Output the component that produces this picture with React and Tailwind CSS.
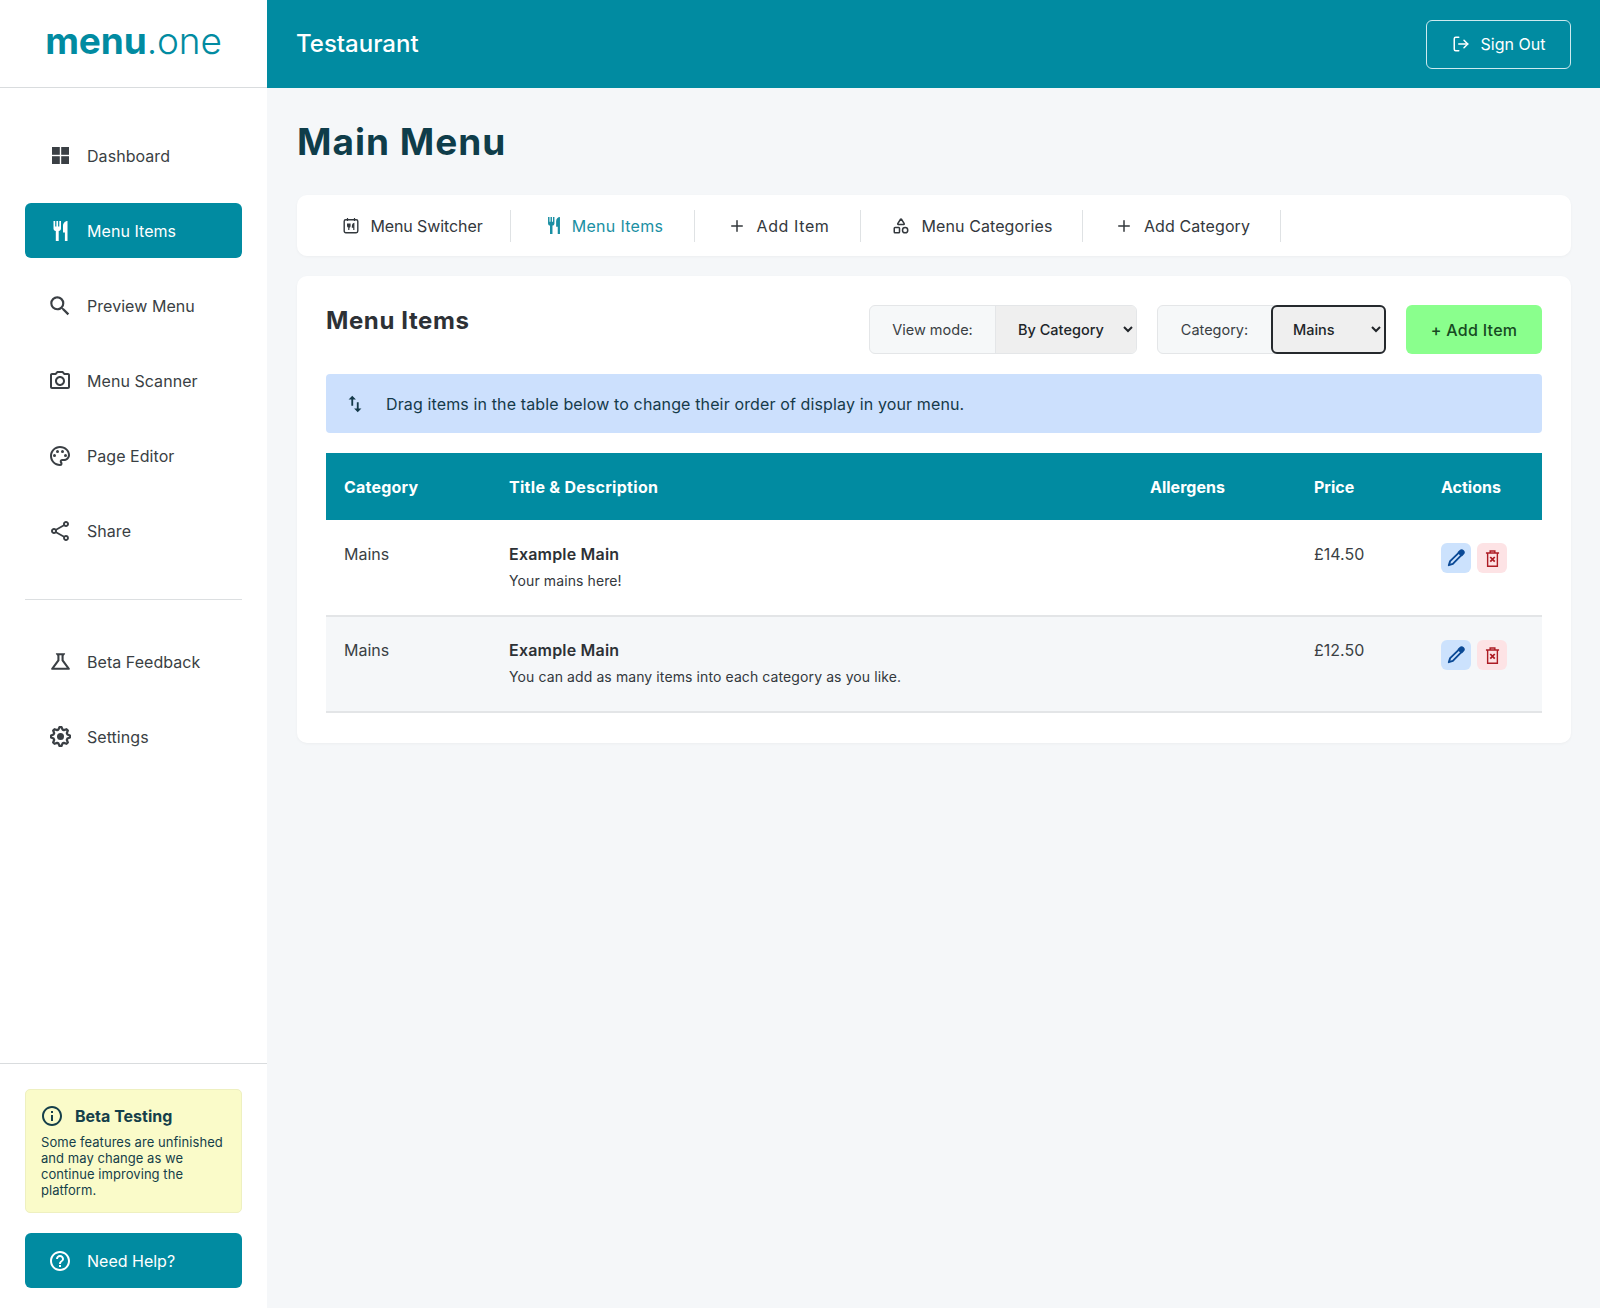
import React from 'react';
import { MdSearch, MdOutlinePhotoCamera, MdOutlinePalette, MdOutlineShare, MdOutlineScience, MdOutlineInfo, MdOutlineHelpOutline, MdSwapVert } from 'react-icons/md';
import { LuShapes, LuPlus, LuLogOut } from 'react-icons/lu';

const Squares = ({ className }) => (
  <svg viewBox="0 0 17 17" fill="currentColor" className={className}>
    <rect x="0" y="0" width="7.8" height="7.8" />
    <rect x="9.2" y="0" width="7.8" height="7.8" />
    <rect x="0" y="9.2" width="7.8" height="7.8" />
    <rect x="9.2" y="9.2" width="7.8" height="7.8" />
  </svg>
);

const ForkKnife = ({ className }) => (
  <svg viewBox="0 0 15 20" fill="currentColor" className={className}>
    <path d="M.5 0h1.7v5.5h1.2V0h1.7v5.5h1.2V0H8v7.5c0 1.3-1 2.3-2.3 2.6V20H2.8V10.1C1.5 9.8.5 8.8.5 7.5z" />
    <path d="M14.5 0v20h-2.6v-8.5H10V5c0-2.7 2-5 4.5-5z" />
  </svg>
);

const CalendarFork = ({ className }) => (
  <svg viewBox="0 0 16 16" fill="none" stroke="currentColor" className={className}>
    <rect x="1.2" y="2.2" width="13.6" height="13" rx="1.6" strokeWidth="1.4" />
    <path d="M4.5 0.4v3.2M11.5 0.4v3.2M4.6 6v2.6c0 .8.6 1.1 1.2 1.1s1.2-.3 1.2-1.1V6M5.8 6v6.6M10.8 12.6V6c-1.1.4-1.4 2-1.4 3.6h1.4" strokeWidth="1.2" />
  </svg>
);

const Pencil = ({ className }) => (
  <svg viewBox="0 0 16 16" fill="none" stroke="currentColor" strokeWidth="1.7" strokeLinejoin="round" className={className}>
    <path d="M10.6 3.2l2.2 2.2L5.2 13.2 1.6 14.4l1.2-3.6z" />
    <path d="M10.4 3l1.3-1.3a1.5 1.5 0 0 1 2.6 2.6L13 5.6z" fill="currentColor" />
  </svg>
);

const TrashX = ({ className }) => (
  <svg viewBox="0 0 16 18" fill="none" stroke="currentColor" strokeWidth="1.5" className={className}>
    <path d="M1 3.2h14M5.5 3V1h5v2M2.8 3.2v14h10.4v-14" />
    <path d="M5.6 7.4l4.8 5M10.4 7.4l-4.8 5" strokeWidth="1.9" />
  </svg>
);

// outlined cog with a solid hub
const gearPoints = Array.from({ length: 32 }, (_, i) => {
  const tooth = i % 4 < 2;
  const a = ((i - 0.5) / 32) * Math.PI * 2;
  const r = tooth ? 10.8 : 8.2;
  return `${(12 + r * Math.cos(a)).toFixed(2)},${(12 + r * Math.sin(a)).toFixed(2)}`;
}).join(' ');

const Gear = ({ className }) => (
  <svg viewBox="0 0 24 24" className={className}>
    <polygon points={gearPoints} fill="none" stroke="currentColor" strokeWidth="2.6" strokeLinejoin="round" />
    <circle cx="12" cy="12" r="4" fill="currentColor" />
  </svg>
);

const navTop = [
  { label: 'Dashboard', icon: <Squares className="w-[17px] h-[17px]" /> },
  { label: 'Menu Items', icon: <ForkKnife className="w-[15px] h-[20px]" />, active: true },
  { label: 'Preview Menu', icon: <MdSearch className="w-[26px] h-[26px] shrink-0" /> },
  { label: 'Menu Scanner', icon: <MdOutlinePhotoCamera className="w-[24px] h-[24px] shrink-0" /> },
  { label: 'Page Editor', icon: <MdOutlinePalette className="w-[24px] h-[24px] shrink-0" /> },
  { label: 'Share', icon: <MdOutlineShare className="w-[24px] h-[24px] shrink-0" /> },
];

const navBottom = [
  { label: 'Beta Feedback', icon: <MdOutlineScience className="w-[25px] h-[25px] shrink-0" /> },
  { label: 'Settings', icon: <Gear className="w-[21px] h-[21px] shrink-0" /> },
];

const NavItem = ({ item }) => (
  <a className={`flex items-center h-[55px] rounded-md pl-[25px] gap-[17px] text-base ${item.active ? 'bg-[#018ba1] text-white' : 'text-[#3a3f44]'}`}>
    <span className="w-[20px] flex justify-center">{item.icon}</span>
    <span className="tracking-[0.05px]">{item.label}</span>
  </a>
);

const tabs = [
  { label: 'Menu Switcher', icon: <CalendarFork className="w-[16px] h-[17px]" />, cls: 'w-[214px] pl-[19px] tracking-[-0.1px]' },
  { label: 'Menu Items', icon: <ForkKnife className="w-[14px] h-[17px]" />, active: true, cls: 'w-[184px] pl-[5px] tracking-[0.3px]' },
  { label: 'Add Item', icon: <LuPlus className="w-[18px] h-[18px]" />, cls: 'w-[166px] pl-[2px] tracking-[0.6px]' },
  { label: 'Menu Categories', icon: <LuShapes className="w-[18px] h-[18px]" />, cls: 'w-[222px] pl-[2px] tracking-[0.1px]' },
  { label: 'Add Category', icon: <LuPlus className="w-[18px] h-[18px]" />, cls: 'w-[198px] pl-[2px] tracking-[0.1px]' },
];

const rows = [
  { price: '£14.50', desc: 'Your mains here!', bg: 'bg-white', pt: 'pt-[22px]' },
  { price: '£12.50', desc: 'You can add as many items into each category as you like.', bg: 'bg-[#f5f7f9]', pt: 'pt-[21px]' },
];

const App = () => {
  return (
    <div className="flex w-full h-[1308px] bg-[#f5f7f9] text-[#2d3136] font-['Inter','Liberation_Sans',sans-serif] overflow-hidden">
      <aside className="w-[267px] shrink-0 bg-white flex flex-col">
        <div className="h-[88px] border-b border-[#d9dcde] flex items-center justify-center pb-[6px] text-[#018ba1] text-[37px] tracking-[-0.1px] leading-none">
          <span className="font-bold">menu</span><span className="font-light">.one</span>
        </div>
        <nav className="px-[25px] pt-[40px] flex flex-col gap-5">
          {navTop.map(item => <NavItem key={item.label} item={item} />)}
        </nav>
        <div className="mx-[25px] mt-[41px] mb-[34px] border-t border-[#dcdfe1]"></div>
        <nav className="px-[25px] flex flex-col gap-5">
          {navBottom.map(item => <NavItem key={item.label} item={item} />)}
        </nav>
        <div className="mt-auto border-t border-[#d9dcde] px-[25px] pt-[25px] pb-5 flex flex-col gap-5">
          <div className="h-[124px] rounded-[5px] bg-[#fafbc9] border border-[#eef0c0] pl-[15px] pr-2 pt-[14px] text-[#153f4a]">
            <div className="flex items-center gap-[11px] font-bold text-base leading-5">
              <MdOutlineInfo className="w-[24px] h-[24px] -ml-[1px]" />
              <span>Beta Testing</span>
            </div>
            <p className="mt-[6px] text-[13px] leading-[16px] tracking-[0.05px]">Some features are unfinished and may change as we continue improving the platform.</p>
          </div>
          <a className="flex items-center h-[55px] rounded-md bg-[#018ba1] text-white pl-[23px] gap-[15px] text-base">
            <MdOutlineHelpOutline className="w-[24px] h-[24px]" />
            <span>Need Help?</span>
          </a>
        </div>
      </aside>

      <div className="flex-1 flex flex-col">
        <header className="h-[88px] bg-[#018ba1] text-white flex items-center justify-between pl-[29px] pr-[29px]">
          <span className="text-[24px] font-medium">Testaurant</span>
          <button className="flex items-center gap-[11px] h-[49px] w-[145px] justify-center border border-[#cdeaef] rounded-md text-base">
            <LuLogOut className="w-[18px] h-[18px]" />
            Sign Out
          </button>
        </header>

        <main className="pl-[30px] pr-[29px] pb-8">
          <h1 className="mt-[30px] h-[48px] leading-[48px] text-[37px] font-bold tracking-[1px] text-[#0f3d4a]">Main Menu</h1>
          <div className="mt-[29px] h-[61px] bg-white rounded-[10px] shadow-[0_1px_3px_rgba(0,0,0,0.04)] flex items-center">
            {tabs.map(t => (
              <a key={t.label} className={`flex items-center justify-center gap-[11px] h-[32px] border-r border-[#dfe2e4] text-base ${t.cls} ${t.active ? 'text-[#1a8fa3]' : 'text-[#33383d]'}`}>
                {t.icon}
                <span>{t.label}</span>
              </a>
            ))}
          </div>

          <section className="mt-[20px] h-[467px] bg-white rounded-[10px] shadow-[0_1px_3px_rgba(0,0,0,0.04)] p-[29px]">
            <div className="flex items-start justify-between h-[49px]">
              <h2 className="text-2xl font-bold text-[#2d3136] leading-[32px] tracking-[0.6px]">Menu Items</h2>
              <div className="flex items-center gap-5">
                <div className="flex h-[49px] w-[268px] rounded-md border border-[#e4e6e8] bg-[#f6f8f9] overflow-hidden">
                  <label className="w-[126px] pt-px border-r border-[#e4e6e8] flex items-center justify-center text-[14.5px] text-[#3a3f44]">View mode:</label>
                  <select defaultValue="By Category" className="flex-1 bg-[#efefef] pl-[18px] pr-1 text-[14.5px] font-medium text-[#212529] outline-none">
                    <option>By Category</option>
                  </select>
                </div>
                <div className="flex h-[49px] w-[229px] rounded-md border border-[#e4e6e8] bg-[#f6f8f9]">
                  <label className="w-[113px] pt-px flex items-center justify-center text-[14.5px] text-[#3a3f44]">Category:</label>
                  <select defaultValue="Mains" className="flex-1 bg-[#efefef] -my-px -mr-px pl-[16px] pr-1 text-[14.5px] font-medium text-[#212529] border-2 border-[#25292d] rounded-md outline-none">
                    <option>Mains</option>
                  </select>
                </div>
                <button className="h-[49px] w-[136px] rounded-md bg-[#8aff8d] text-[#174a22] text-base tracking-[0.3px] font-medium">+ Add Item</button>
              </div>
            </div>

            <div className="mt-[20px] h-[59px] rounded-[4px] bg-[#cce0fd] flex items-center pl-[18px] gap-[20px] text-[#153a4a] text-base">
              <MdSwapVert className="w-[22px] h-[22px]" />
              <span className="tracking-[0.13px]">Drag items in the table below to change their order of display in your menu.</span>
            </div>

            <table className="mt-[20px] w-full table-fixed text-left">
              <thead>
                <tr className="bg-[#018ba1] text-white text-base h-[67px]">
                  <th className="w-[165px] pl-[18px] font-bold tracking-[0.2px]">Category</th>
                  <th className="w-[641px] pl-[18px] font-bold tracking-[0.3px]">Title &amp; Description</th>
                  <th className="w-[164px] pl-[18px] font-bold">Allergens</th>
                  <th className="w-[127px] pl-[18px] font-bold">Price</th>
                  <th className="w-[119px] pl-[18px] font-bold">Actions</th>
                </tr>
              </thead>
              <tbody>
                {rows.map(r => (
                  <tr key={r.price} className={`${r.bg} border-b-2 border-[#e3e5e7] h-[96px] align-top`}>
                    <td className={`pl-[18px] ${r.pt} text-[#3a3f44]`}>Mains</td>
                    <td className={`pl-[18px] ${r.pt}`}>
                      <div className="font-semibold tracking-[0.2px] text-[#2d3136]">Example Main</div>
                      <div className="mt-[5px] text-sm tracking-[0.1px] text-[#33383d]">{r.desc}</div>
                    </td>
                    <td></td>
                    <td className={`pl-[18px] ${r.pt} text-[#3a3f44]`}>{r.price}</td>
                    <td className="pl-[18px] pt-[23px]">
                      <div className="flex gap-[6px]">
                        <button className="w-[30px] h-[30px] rounded-md bg-[#cce2fd] text-[#0b4a96] flex items-center justify-center">
                          <Pencil className="w-[18px] h-[18px]" />
                        </button>
                        <button className="w-[30px] h-[30px] rounded-md bg-[#fde3e5] text-[#ad1c24] flex items-center justify-center">
                          <TrashX className="w-[15px] h-[17px]" />
                        </button>
                      </div>
                    </td>
                  </tr>
                ))}
              </tbody>
            </table>
          </section>
        </main>
      </div>
    </div>
  );
};

export default App;
